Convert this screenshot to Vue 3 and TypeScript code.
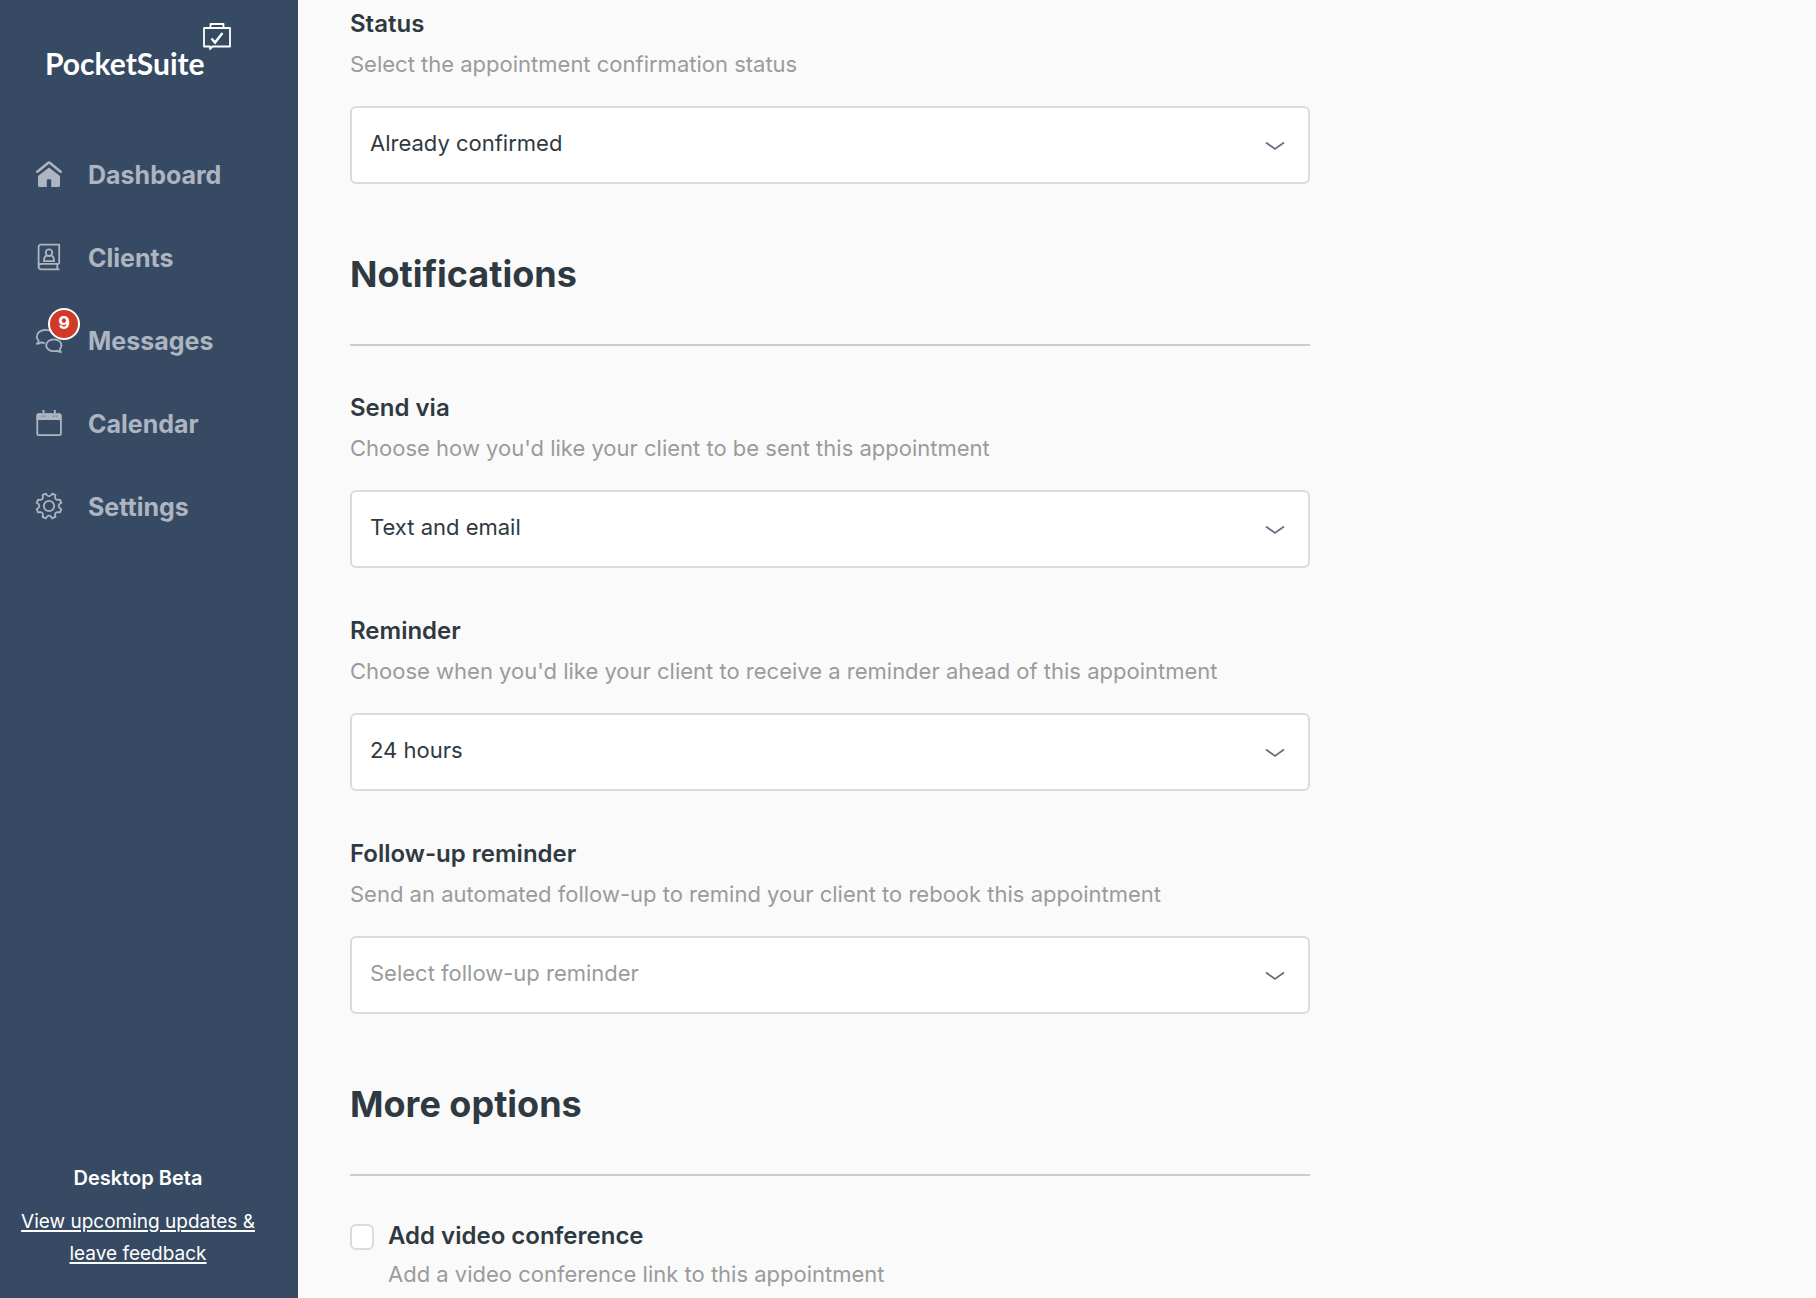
<script setup lang="ts">
import { ref } from 'vue'

interface NavItem {
  id: 'dashboard' | 'clients' | 'messages' | 'calendar' | 'settings'
  label: string
  badge?: number
}

interface Field {
  id: string
  label: string
  hint: string
  options: string[]
  placeholder?: string
}

const navItems: NavItem[] = [
  { id: 'dashboard', label: 'Dashboard' },
  { id: 'clients', label: 'Clients' },
  { id: 'messages', label: 'Messages', badge: 9 },
  { id: 'calendar', label: 'Calendar' },
  { id: 'settings', label: 'Settings' },
]

const statusFields: Field[] = [
  {
    id: 'status',
    label: 'Status',
    hint: 'Select the appointment confirmation status',
    options: ['Already confirmed'],
  },
]

const notificationFields: Field[] = [
  {
    id: 'send-via',
    label: 'Send via',
    hint: "Choose how you'd like your client to be sent this appointment",
    options: ['Text and email'],
  },
  {
    id: 'reminder',
    label: 'Reminder',
    hint: "Choose when you'd like your client to receive a reminder ahead of this appointment",
    options: ['24 hours'],
  },
  {
    id: 'follow-up',
    label: 'Follow-up reminder',
    hint: 'Send an automated follow-up to remind your client to rebook this appointment',
    options: [],
    placeholder: 'Select follow-up reminder',
  },
]

const groups = [
  { title: '', fields: statusFields },
  { title: 'Notifications', fields: notificationFields },
]

const values = ref<Record<string, string>>({
  status: 'Already confirmed',
  'send-via': 'Text and email',
  reminder: '24 hours',
  'follow-up': '',
})
const videoConference = ref(false)

// Outline of the eight-toothed settings gear.
function gearPath(): string {
  const at = (deg: number, r: number) => {
    const a = (deg * Math.PI) / 180
    return `${(13 + r * Math.cos(a)).toFixed(2)} ${(13 + r * Math.sin(a)).toFixed(2)}`
  }
  let d = ''
  for (let i = 0; i < 8; i++) {
    const mid = 22.5 + i * 45
    d += `${i ? 'L' : 'M'}${at(mid - 8, 12.7)} L${at(mid + 8, 12.7)} C${at(mid + 14, 8.8)} ${at(mid + 31, 8.8)} ${at(mid + 37, 12.7)} `
  }
  return d + 'Z'
}
const gear = gearPath()
</script>

<template>
  <div class="app">
    <aside class="sidebar">
      <a class="logo" href="#">
        <span class="wordmark">PocketSuite</span>
        <svg class="logo-mark" viewBox="0 0 28 28" aria-hidden="true">
          <path d="M7.500 4.500V1h13v3.500M1 5h26v18.500H9.500L7 26v-2.500H1z" fill="none" stroke="#fff" stroke-width="1.800" stroke-linejoin="round" />
          <path d="M8.500 15.500l3.500 4L19.500 10" fill="none" stroke="#fff" stroke-width="2.400" />
        </svg>
      </a>

      <nav class="nav" aria-label="Main">
        <a v-for="item in navItems" :key="item.id" class="nav-item" href="#">
          <span class="nav-icon">
            <svg viewBox="0 0 26 26" aria-hidden="true">
              <template v-if="item.id === 'dashboard'">
                <path class="line roof" d="M1.300 10.700L12 1.900q1-.8 2 0l10.700 8.800" />
                <path class="solid" d="M13 6.500l11 8.600V24.500q0 1.500-1.500 1.500H15.200v-6.500q0-1.300-1.300-1.300h-1.800q-1.300 0-1.300 1.300V26H3.500Q2 26 2 24.500v-9.400z" />
              </template>
              <template v-else-if="item.id === 'clients'">
                <path class="line" d="M23.200 19.800V.7H5Q2.600.7 2.600 3v19.500q0 2.800 2.800 2.800h18M2.600 22.500q0-2.700 2.800-2.700h17.800M21.300 20v5" />
                <circle class="line" cx="13" cy="8.700" r="3.300" />
                <path class="line" d="M10.800 11.400Q8 12.500 7.900 17.200h10.200q-.1-4.700-2.900-5.800" />
              </template>
              <template v-else-if="item.id === 'messages'">
                <path class="line" d="M8.800 15.800Q6.800 16 5 15.300 3.500 16.700.9 16.800 2.600 15.300 2.600 13.700.8 12 .8 9.500C.8 5.800 4.700 2.900 9.700 2.900c4.600 0 8.200 2.400 8.800 5.600" />
                <path class="line" d="M25 25.100q-2.400-.1-3.900-1.300-1.400.4-3.100.4c-4.500 0-7.800-2.600-7.800-5.900s3.300-5.900 7.700-5.900 7.500 2.600 7.500 5.900q0 2.300-1.700 4 0 1.500 1.300 2.800z" />
              </template>
              <template v-else-if="item.id === 'calendar'">
                <rect class="line" x="1.300" y="4.500" width="23.600" height="20.700" rx="1.500" />
                <path class="solid" d="M.5 10V5q0-1.800 1.800-1.800h3.500V7h3.400V3.200h7.900V7h3.400V3.200h2.900q1.800 0 1.800 1.800v5z" />
                <path class="line ring" d="M7.500 0v7M18.800 0v7" />
              </template>
              <template v-else>
                <path class="line" :d="gear" />
                <circle class="line" cx="13" cy="13" r="5.200" />
              </template>
            </svg>
            <span v-if="item.badge" class="badge">{{ item.badge }}</span>
          </span>
          <span>{{ item.label }}</span>
        </a>
      </nav>

      <div class="beta">
        <strong>Desktop Beta</strong>
        <a href="#">View upcoming updates &amp; leave feedback</a>
      </div>
    </aside>

    <main class="main">
      <form class="form" @submit.prevent>
        <section v-for="group in groups" :key="group.title" class="group">
          <h2 v-if="group.title">{{ group.title }}</h2>
          <div class="fields">
            <div v-for="field in group.fields" :key="field.id" class="field">
              <label :for="field.id">{{ field.label }}</label>
              <p :id="`${field.id}-hint`">{{ field.hint }}</p>
              <div class="select">
                <select
                  :id="field.id"
                  v-model="values[field.id]"
                  :class="{ empty: !values[field.id] }"
                  :aria-describedby="`${field.id}-hint`"
                >
                  <option v-if="field.placeholder" value="">{{ field.placeholder }}</option>
                  <option v-for="option in field.options" :key="option" :value="option">{{ option }}</option>
                </select>
                <svg class="chevron" viewBox="0 0 20 10" aria-hidden="true">
                  <path d="M1 1.500l9 6.500 9-6.500" />
                </svg>
              </div>
            </div>
          </div>
        </section>

        <section class="group">
          <h2>More options</h2>
          <div class="check">
            <input id="video" v-model="videoConference" type="checkbox" aria-describedby="video-hint" />
            <div>
              <label for="video">Add video conference</label>
              <p id="video-hint">Add a video conference link to this appointment</p>
            </div>
          </div>
        </section>
      </form>
    </main>
  </div>
</template>

<style>
body {
  margin: 0;
  background: #fafafa;
}
</style>

<style scoped>
* {
  box-sizing: border-box;
}

.app {
  display: flex;
  min-height: 100vh;
  font-family: Inter, "Liberation Sans", sans-serif;
  color: #2f3941;
}

.sidebar {
  display: flex;
  flex: 0 0 298px;
  flex-direction: column;
  background: #374a64;
  color: #fff;
}

.logo {
  display: flex;
  align-items: flex-start;
  padding: 23px 0 0 45px;
  color: #fff;
  text-decoration: none;
}

.wordmark {
  margin-top: 20px;
  font: 700 30px/40px Lato, sans-serif;
}

.logo-mark {
  width: 28px;
  height: 28px;
  margin-left: -2px;
}

.nav {
  display: flex;
  flex-direction: column;
  gap: 51px;
  padding: 76px 0 0 36px;
}

.nav-item {
  display: flex;
  align-items: center;
  gap: 26px;
  color: #adb5c1;
  font-size: 25px;
  font-weight: 700;
  line-height: 32px;
  text-decoration: none;
}

.nav-icon {
  position: relative;
  width: 26px;
  height: 26px;
  margin-bottom: 2px;
}

.nav-icon svg {
  display: block;
  width: 26px;
  height: 26px;
  overflow: visible;
}

.line {
  fill: none;
  stroke: #adb5c1;
  stroke-width: 1.8;
  stroke-linejoin: round;
}

.roof {
  stroke-width: 2.6;
  stroke-linecap: round;
}

.ring {
  stroke-width: 2;
}

.solid {
  fill: #adb5c1;
}

.badge {
  position: absolute;
  top: -19px;
  left: 12px;
  width: 32px;
  height: 32px;
  border: 2px solid #fff;
  border-radius: 50%;
  background: #d03a27;
  color: #fff;
  font-size: 18px;
  line-height: 25px;
  text-align: center;
}

.beta {
  display: flex;
  flex-direction: column;
  gap: 12px;
  margin-top: auto;
  padding: 0 34px 28px 12px;
  font-size: 19px;
  line-height: 32px;
  text-align: center;
}

.beta strong {
  font-size: 20px;
  font-weight: 600;
}

.beta a {
  color: #fff;
  text-decoration-thickness: 2px;
  text-underline-offset: 2px;
}

.main {
  flex: 1;
  min-width: 0;
  padding: 4px 52px;
}

.form {
  display: flex;
  flex-direction: column;
  gap: 66px;
  max-width: 960px;
}

h2 {
  margin: 0 0 42px;
  padding-bottom: 46px;
  border-bottom: 2px solid #ccc;
  font-size: 36px;
  font-weight: 700;
  line-height: 48px;
}

.fields {
  display: flex;
  flex-direction: column;
  gap: 43px;
}

label {
  display: block;
  font-size: 24px;
  font-weight: 600;
  line-height: 40px;
}

p {
  margin: 0;
  color: #9b9b9b;
  font-size: 22px;
  line-height: 40px;
}

.select {
  display: grid;
  align-items: center;
  margin-top: 22px;
}

select {
  grid-area: 1 / 1;
  width: 100%;
  height: 78px;
  padding: 0 60px 4px 18px;
  border: 2px solid #d8dce0;
  border-radius: 6px;
  appearance: none;
  background: #fff;
  color: #2f3941;
  font: inherit;
  font-size: 22px;
}

select.empty {
  color: #9b9b9b;
}

.chevron {
  grid-area: 1 / 1;
  justify-self: end;
  width: 20px;
  height: 10px;
  margin: 2px 25px 0 0;
  pointer-events: none;
}

.chevron path {
  fill: none;
  stroke: #66717f;
  stroke-width: 1.8;
}

.check {
  display: flex;
  gap: 14px;
}

.check input {
  flex: none;
  width: 24px;
  height: 26px;
  margin: 6px 0 0;
  border: 2px solid #d8dce0;
  border-radius: 6px;
  appearance: none;
  background: #fff;
}

.check input:checked {
  background: #374a64;
}

.check label {
  line-height: 36px;
}
</style>
